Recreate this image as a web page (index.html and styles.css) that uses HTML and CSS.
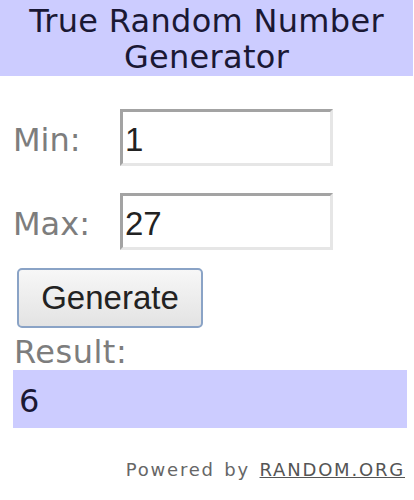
FILE: index.html
```html
<!DOCTYPE html>
<html>
<head>
<meta charset="utf-8">
<link rel="stylesheet" href="styles.css">
</head>
<body>
<div class="widget">
  <div class="title">True Random Number<br>Generator</div>
  <div class="form">
    <div class="row">
      <label class="label" for="min">Min:</label>
      <input class="field" id="min" type="text" value="1">
    </div>
    <div class="row row-max">
      <label class="label" for="max">Max:</label>
      <input class="field" id="max" type="text" value="27">
    </div>
    <button class="generate" type="button">Generate</button>
    <div class="result-label">Result:</div>
    <div class="result">6</div>
    <div class="powered">Powered by <a href="#">RANDOM.ORG</a></div>
  </div>
</div>
</body>
</html>
```
FILE: styles.css
```css
html, body {
  margin: 0;
  padding: 0;
  background: #ffffff;
}

.widget {
  width: 414px;
  font-family: "DejaVu Sans", Verdana, sans-serif;
}

.title {
  width: 413px;
  background: #ccccff;
  color: #1a1834;
  font-size: 32px;
  line-height: 36px;
  letter-spacing: 0.3px;
  text-align: center;
  padding: 3px 0 1px;
}

.form {
  display: flex;
  flex-direction: column;
  align-items: flex-start;
  padding-top: 33px;
}

.row {
  display: flex;
  align-items: baseline;
}

.row-max {
  margin-top: 27px;
}

.label {
  width: 107px;
  padding-left: 13px;
  font-size: 32px;
  color: #7d7d7d;
}

.field {
  box-sizing: border-box;
  width: 213px;
  height: 57px;
  margin: 0;
  padding: 4px 2px 0;
  font-family: "Liberation Sans", Arial, sans-serif;
  font-size: 33px;
  color: #222222;
  background: #ffffff;
  border: 3px solid;
  border-color: #a3a3a3 #e6e6e6 #e6e6e6 #a3a3a3;
  outline: none;
}

.generate {
  box-sizing: border-box;
  width: 186px;
  height: 60px;
  margin: 18px 0 0 17px;
  padding: 0;
  font-family: "Liberation Sans", Arial, sans-serif;
  font-size: 33px;
  color: #222222;
  background: linear-gradient(#f7f7f7, #e3e3e3);
  border: 2px solid #8aa3c6;
  border-radius: 5px;
}

.result-label {
  margin: 6px 0 0 0;
  padding-left: 14px;
  font-size: 32px;
  line-height: 36px;
  letter-spacing: 0.5px;
  color: #7d7d7d;
}

.result {
  box-sizing: border-box;
  width: 394px;
  height: 58px;
  margin-left: 13px;
  padding: 4px 0 0 6px;
  background: #ccccff;
  color: #1a1834;
  font-size: 32px;
  line-height: 54px;
}

.powered {
  align-self: stretch;
  margin-top: 32px;
  padding-right: 9px;
  text-align: right;
  font-size: 18px;
  line-height: 20px;
  letter-spacing: 1.8px;
  word-spacing: 2px;
  color: #666666;
}

.powered a {
  color: #555555;
  text-decoration: underline;
}
```
